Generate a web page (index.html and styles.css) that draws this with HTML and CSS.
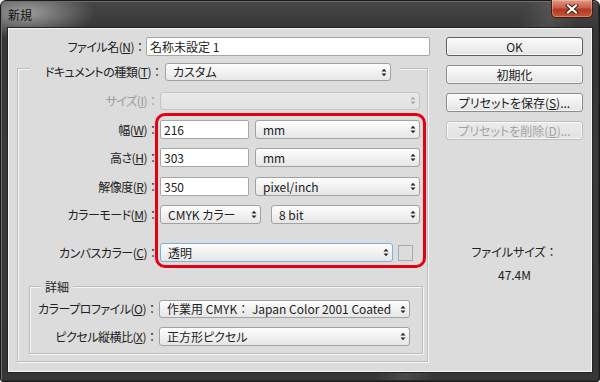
FILE: index.html
```html
<!DOCTYPE html>
<html lang="ja">
<head>
<meta charset="utf-8">
<title>新規</title>
<link rel="stylesheet" href="styles.css">
</head>
<body>
<div class="window">
  <div class="titlebar">
    <span class="title">新規</span>
    <div class="close">
      <svg viewBox="0 0 14 10" width="14" height="10"><path d="M3 1.5 L11 8.5 M11 1.5 L3 8.5" stroke="#3a1a12" stroke-width="4" stroke-linecap="square"/><path d="M3 1.5 L11 8.5 M11 1.5 L3 8.5" stroke="#fff" stroke-width="2.2" stroke-linecap="square"/></svg>
    </div>
  </div>
  <div class="client">
    <div class="left">
      <div class="row name-row">
        <span class="lbl name-lbl">ファイル名(<u>N</u>)<span class="colon">：</span></span>
        <div class="input name-input">名称未設定 1</div>
      </div>
      <div class="group">
        <div class="group-head">
          <span class="lbl head-lbl">ドキュメントの種類(<u>T</u>)<span class="colon">：</span></span>
          <div class="select type-sel"><span>カスタム</span><svg class="arr" viewBox="0 0 6 9"><path d="M0.5 3.5 L3 0.8 L5.5 3.5Z M0.5 5.5 L3 8.2 L5.5 5.5Z" fill="#2a2a2a"/></svg></div>
        </div>
        <div class="row r-size disabled">
          <span class="lbl glbl">サイズ(<u>I</u>)<span class="colon">：</span></span>
          <div class="select dis-sel"><span></span><svg class="arr" viewBox="0 0 6 9"><path d="M0.5 3.5 L3 0.8 L5.5 3.5Z M0.5 5.5 L3 8.2 L5.5 5.5Z" fill="#a8a8a8"/></svg></div>
        </div>
        <div class="row r-w">
          <span class="lbl glbl">幅(<u>W</u>)<span class="colon">：</span></span>
          <div class="input num">216</div>
          <div class="select unit"><span>mm</span><svg class="arr" viewBox="0 0 6 9"><path d="M0.5 3.5 L3 0.8 L5.5 3.5Z M0.5 5.5 L3 8.2 L5.5 5.5Z" fill="#2a2a2a"/></svg></div>
        </div>
        <div class="row r-h">
          <span class="lbl glbl">高さ(<u>H</u>)<span class="colon">：</span></span>
          <div class="input num">303</div>
          <div class="select unit"><span>mm</span><svg class="arr" viewBox="0 0 6 9"><path d="M0.5 3.5 L3 0.8 L5.5 3.5Z M0.5 5.5 L3 8.2 L5.5 5.5Z" fill="#2a2a2a"/></svg></div>
        </div>
        <div class="row r-res">
          <span class="lbl glbl">解像度(<u>R</u>)<span class="colon">：</span></span>
          <div class="input num">350</div>
          <div class="select unit"><span>pixel/inch</span><svg class="arr" viewBox="0 0 6 9"><path d="M0.5 3.5 L3 0.8 L5.5 3.5Z M0.5 5.5 L3 8.2 L5.5 5.5Z" fill="#2a2a2a"/></svg></div>
        </div>
        <div class="row r-mode">
          <span class="lbl glbl">カラーモード(<u>M</u>)<span class="colon">：</span></span>
          <div class="select mode"><span>CMYK カラー</span><svg class="arr" viewBox="0 0 6 9"><path d="M0.5 3.5 L3 0.8 L5.5 3.5Z M0.5 5.5 L3 8.2 L5.5 5.5Z" fill="#2a2a2a"/></svg></div>
          <div class="select bits"><span>8 bit</span><svg class="arr" viewBox="0 0 6 9"><path d="M0.5 3.5 L3 0.8 L5.5 3.5Z M0.5 5.5 L3 8.2 L5.5 5.5Z" fill="#2a2a2a"/></svg></div>
        </div>
        <div class="row r-canvas">
          <span class="lbl glbl">カンバスカラー(<u>C</u>)<span class="colon">：</span></span>
          <div class="select canvas focus"><span>透明</span><svg class="arr" viewBox="0 0 6 9"><path d="M0.5 3.5 L3 0.8 L5.5 3.5Z M0.5 5.5 L3 8.2 L5.5 5.5Z" fill="#2a2a2a"/></svg></div>
          <div class="swatch"></div>
        </div>
        <div class="detail">
          <div class="detail-head">詳細</div>
          <div class="row r-prof">
            <span class="lbl dlbl">カラープロファイル(<u>O</u>)<span class="colon">：</span></span>
            <div class="select dsel"><span>作業用 CMYK<span class="colon">：</span> Japan Color 2001 Coated</span><svg class="arr" viewBox="0 0 6 9"><path d="M0.5 3.5 L3 0.8 L5.5 3.5Z M0.5 5.5 L3 8.2 L5.5 5.5Z" fill="#2a2a2a"/></svg></div>
          </div>
          <div class="row r-asp">
            <span class="lbl dlbl">ピクセル縦横比(<u>X</u>)<span class="colon">：</span></span>
            <div class="select dsel"><span>正方形ピクセル</span><svg class="arr" viewBox="0 0 6 9"><path d="M0.5 3.5 L3 0.8 L5.5 3.5Z M0.5 5.5 L3 8.2 L5.5 5.5Z" fill="#2a2a2a"/></svg></div>
          </div>
        </div>
      </div>
    </div>
    <div class="right">
      <button class="btn default">OK</button>
      <button class="btn">初期化</button>
      <button class="btn">プリセットを保存(<u>S</u>)...</button>
      <button class="btn disabled-btn">プリセットを削除(<u>D</u>)...</button>
      <div class="filesize">
        <div>ファイルサイズ<span class="colon">：</span></div>
        <div class="size-val">47.4M</div>
      </div>
    </div>
    <div class="highlight"></div>
  </div>
</div>
</body>
</html>
```
FILE: styles.css
```css
* { box-sizing: border-box; margin: 0; padding: 0; }
html, body { width: 600px; height: 382px; background: #ffffff; overflow: hidden; }
body {
  font-family: "Noto Sans CJK JP", "Noto Sans", sans-serif;
  font-size: 12px;
  line-height: 16px;
  color: #222222;
  font-feature-settings: "palt";
}
u { text-decoration: underline; text-underline-offset: 1px; }
.colon { font-feature-settings: normal; letter-spacing: 0; }

.window {
  width: 600px;
  height: 382px;
  border: 1px solid #1a1a1a;
  border-radius: 6px 6px 3px 3px;
  padding: 0 6px 8px 6px;
  display: flex;
  flex-direction: column;
  background:
    radial-gradient(ellipse 70px 26px at 24px 12px, rgba(190,190,190,0.75), rgba(190,190,190,0) 100%),
    linear-gradient(112deg, rgba(255,255,255,0) 70%, rgba(255,255,255,0.10) 74%, rgba(255,255,255,0) 78%),
    linear-gradient(180deg, #474747 0%, #353535 8%, #3a3a3a 40%, #363636 100%);
  box-shadow: inset 1px 1px 0 #6e6e6e, inset -1px -1px 0 #2b2b2b;
}

.titlebar {
  height: 26px;
  position: relative;
  display: flex;
  align-items: center;
  padding-left: 1px;
}
.title { color: #111; font-size: 12px; line-height: 16px; margin-top: 1px; }
.close {
  position: absolute;
  right: 0;
  top: -1px;
  width: 42px;
  height: 18px;
  border: 1px solid #4a1a12;
  border-top: none;
  border-radius: 0 0 5px 5px;
  background: linear-gradient(180deg, #e19a86 0%, #c8604a 45%, #b23a24 55%, #c9563c 100%);
  display: flex;
  align-items: center;
  justify-content: center;
  box-shadow: inset 0 0 0 1px rgba(255,220,200,0.35);
}

.client {
  flex: 1;
  position: relative;
  display: flex;
  background: #dcdcdc;
  border: 1px solid #232323;
  box-shadow: inset 0 0 0 1px #f4f4f4;
}

.left { width: 422px; display: flex; flex-direction: column; }
.row { display: flex; align-items: center; height: 19px; }
.lbl { text-align: right; white-space: nowrap; padding-right: 1px; letter-spacing: -0.5px; }

.name-row { margin-top: 9px; }
.name-lbl { width: 138px; padding-right: 0; }
.name-input { width: 284px; }

.input {
  height: 19px;
  background: #fff;
  border: 1px solid #a7a7a7;
  border-radius: 2px;
  padding: 0 3px;
  display: flex;
  align-items: center;
  white-space: nowrap;
}
.select {
  height: 19px;
  border: 1px solid #a2a2a2;
  border-radius: 3px;
  background: linear-gradient(180deg, #fdfdfd 0%, #f2f2f2 50%, #e6e6e6 100%);
  display: flex;
  align-items: center;
  justify-content: space-between;
  padding: 0 3px 0 7px;
  white-space: nowrap;
}
.arr { width: 6px; height: 9px; flex: none; }

.group {
  margin: 12px 2px 0 9px;
  width: 411px;
  border: 1px solid #bcbcbc;
  box-shadow: inset 1px 1px 0 #f6f6f6, 1px 1px 0 #f6f6f6;
  padding-bottom: 7px;
  display: flex;
  flex-direction: column;
}
.group-head {
  margin: -6px 0 0 12px;
  width: 370px;
  height: 18px;
  background: #dcdcdc;
  display: flex;
  align-items: center;
  justify-content: flex-end;
  padding-right: 9px;
}
.head-lbl { padding-right: 2px; }
.type-sel { width: 226px; height: 18px; }

.glbl { width: 142px; }
.r-size { margin-top: 10px; }
.r-w { margin-top: 10px; }
.r-h { margin-top: 9px; }
.r-res { margin-top: 10px; }
.r-mode { margin-top: 9px; }
.r-canvas { margin-top: 19px; }

.disabled .lbl { color: #9b9b9b; }
.dis-sel {
  width: 260px;
  height: 18px;
  border-color: #c6c6c6;
  background: linear-gradient(180deg, #e9e9e9, #e1e1e1);
}
.num { width: 89px; }
.unit { width: 165px; margin-left: 6px; }
.mode { width: 101px; }
.bits { width: 149px; margin-left: 10px; }
.canvas { width: 233px; }
.focus { border-color: #78b0e4; }
.swatch {
  width: 15px;
  height: 16px;
  margin-left: 5px;
  border: 1px solid #ababab;
  background: #dcdcdc;
}

.detail {
  margin: 24px 0 0 11px;
  width: 394px;
  border: 1px solid #bcbcbc;
  box-shadow: inset 1px 1px 0 #f6f6f6, 1px 1px 0 #f6f6f6;
  padding-bottom: 7px;
  display: flex;
  flex-direction: column;
}
.detail-head {
  margin: -8px 0 0 11px;
  align-self: flex-start;
  background: #dcdcdc;
  padding: 0 4px;
  height: 15px;
  line-height: 15px;
}
.r-prof { margin-top: 6px; height: 18px; }
.r-asp { margin-top: 9px; }
.dlbl { width: 129px; }
.dsel { width: 251px; }
.r-prof .dsel { height: 18px; }

.right {
  width: 137px;
  margin-left: 16px;
  padding-top: 9px;
  display: flex;
  flex-direction: column;
  gap: 9px;
}
.btn {
  height: 19px;
  width: 137px;
  font: inherit;
  font-size: 12px;
  line-height: 16px;
  color: #1c1c1c;
  border: 1px solid #8c8c8c;
  border-radius: 3px;
  background: linear-gradient(180deg, #fbfbfb 0%, #f0f0f0 50%, #e4e4e4 100%);
  box-shadow: inset 0 0 0 1px rgba(255,255,255,0.7);
  display: flex;
  align-items: center;
  justify-content: center;
}
.default { border-color: #5e5e5e; }
.disabled-btn { color: #a3a3a3; border-color: #c0c0c0; background: linear-gradient(180deg, #ececec, #e2e2e2); }

.filesize {
  margin-top: 95px;
  text-align: center;
  line-height: 16px;
}
.size-val { margin-top: 7px; }

.highlight {
  position: absolute;
  left: 147px;
  top: 85px;
  width: 271px;
  height: 155px;
  border: 3px solid #e60012;
  border-radius: 10px;
  pointer-events: none;
}
```
